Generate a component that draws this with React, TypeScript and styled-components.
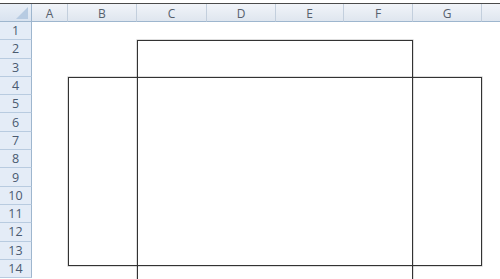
import { createGlobalStyle, styled } from 'styled-components';

const GlobalStyle = createGlobalStyle`
  html, body {
    margin: 0;
    padding: 0;
    background: #ffffff;
  }
`;

const columns = ['A', 'B', 'C', 'D', 'E', 'F', 'G', ''];
const colWidths = [36, 69, 70, 69, 68, 69, 69, 18];
const rowCount = 14;

export default function App() {
  return (
    <>
      <GlobalStyle />
      <Sheet>
        <TopEdge />
        <Grid>
          <Corner>
            <svg width="31" height="17" viewBox="0 0 31 17">
              <polygon points="28,3 28,15 16,15" fill="#b7cbe2" />
            </svg>
          </Corner>
          {columns.map((c, i) => (
            <ColHeader key={`c${i}`} $last={i === columns.length - 1}>
              {c}
            </ColHeader>
          ))}
          {Array.from({ length: rowCount }, (_, r) => (
            <Row key={r}>
              <RowHeader>{r + 1}</RowHeader>
              {columns.map((_, i) => (
                <Cell key={i} />
              ))}
            </Row>
          ))}
        </Grid>
        <Shape $left={137} $top={40} $width={276} $height={260} />
        <Shape $left={68} $top={77} $width={414} $height={189} />
      </Sheet>
    </>
  );
}

const Sheet = styled.div`
  position: relative;
  width: 500px;
  height: 279px;
  overflow: hidden;
  background: #ffffff;
  font-family: 'Open Sans', 'Liberation Sans', sans-serif;
`;

const TopEdge = styled.div`
  height: 3px;
  background: #ffffff;
  border-bottom: 1px solid #4a4a4a;
`;

const Grid = styled.div`
  display: grid;
  grid-template-columns: 32px ${colWidths.map((w) => `${w}px`).join(' ')};
  grid-template-rows: 18px repeat(${rowCount}, 18.3px);
`;

const Row = styled.div`
  display: contents;
`;

const Corner = styled.div`
  background: linear-gradient(#e9eff7, #d9e3f0);
  border-right: 1px solid #9eb6ce;
  border-bottom: 1px solid #9eb6ce;
  box-sizing: border-box;
  display: flex;
`;

const ColHeader = styled.div<{ $last?: boolean }>`
  box-sizing: border-box;
  background: linear-gradient(#f1f4f9, #dfe6ef);
  border-right: ${(p) => (p.$last ? 'none' : '1px solid #c3cfdd')};
  border-bottom: 1px solid #9eb6ce;
  color: #56606c;
  font-size: 12px;
  display: flex;
  align-items: center;
  justify-content: center;
  padding-top: 1px;
`;

const RowHeader = styled.div`
  box-sizing: border-box;
  background: #e4ecf7;
  border-right: 1px solid #9eb6ce;
  border-bottom: 1px solid #b8cbe0;
  color: #4a5a70;
  font-size: 12.5px;
  display: flex;
  align-items: center;
  justify-content: center;
`;

const Cell = styled.div`
  background: #ffffff;
`;

const Shape = styled.div<{ $left: number; $top: number; $width: number; $height: number }>`
  position: absolute;
  left: ${(p) => p.$left}px;
  top: ${(p) => p.$top}px;
  width: ${(p) => p.$width}px;
  height: ${(p) => p.$height}px;
  border: 1px solid #333333;
  box-shadow: 0 0 0 0.6px rgba(0, 0, 0, 0.22);
  box-sizing: border-box;
`;
